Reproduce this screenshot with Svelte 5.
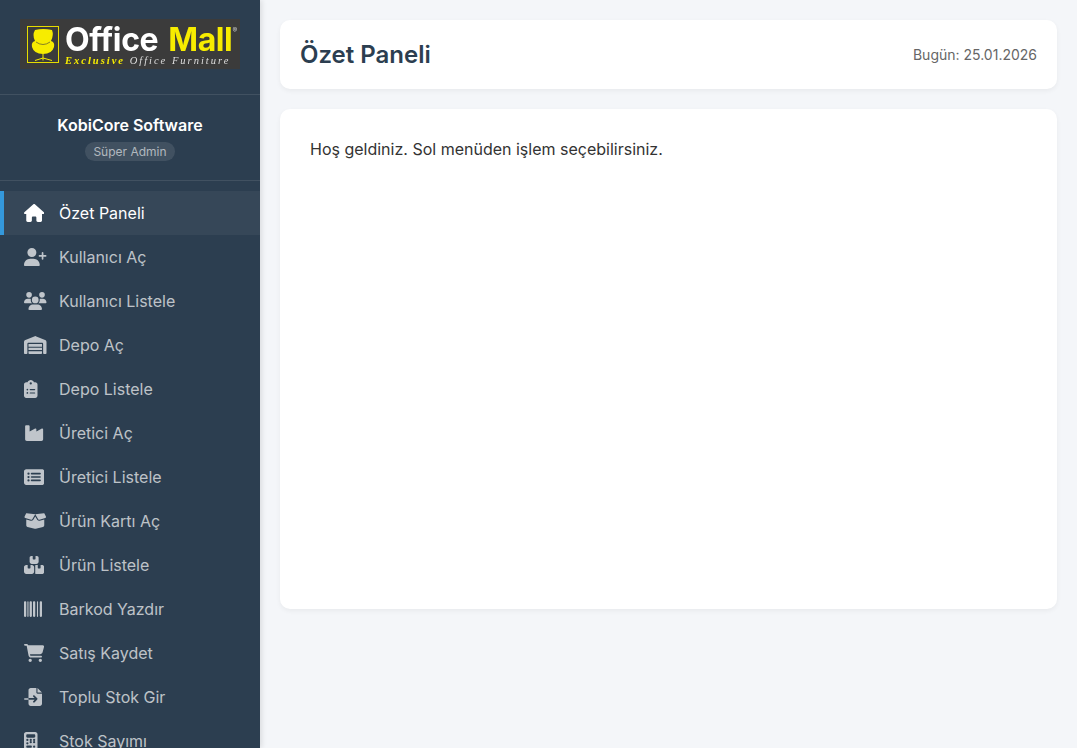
<script>
  const icons = {
    house: ['0 0 576 512', 'M575.8 255.5c0 18-15 32.1-32 32.1h-32l.7 160.2c0 2.7-.2 5.4-.5 8.1V472c0 22.1-17.9 40-40 40H456c-1.1 0-2.2 0-3.3-.1c-1.4 .1-2.8 .1-4.2 .1H416 392c-22.1 0-40-17.9-40-40V448 384c0-17.7-14.3-32-32-32H256c-17.7 0-32 14.3-32 32v64 24c0 22.1-17.9 40-40 40H160 128.1c-1.5 0-3-.1-4.5-.2c-1.2 .1-2.4 .2-3.6 .2H104c-22.1 0-40-17.9-40-40V360c0-.9 0-1.9 .1-2.8V287.6H32c-18 0-32-14-32-32.1c0-9 3-17 10-24L266.4 8c7-7 15-8 22-8s15 2 21 7L564.8 231.5c8 7 12 15 11 24z'],
    userPlus: ['0 0 640 512', 'M96 128a128 128 0 1 1 256 0A128 128 0 1 1 96 128zM0 482.3C0 383.8 79.8 304 178.3 304h91.4C368.2 304 448 383.8 448 482.3c0 16.4-13.3 29.7-29.7 29.7H29.7C13.3 512 0 498.7 0 482.3zM504 312V248H440c-13.3 0-24-10.7-24-24s10.7-24 24-24h64V136c0-13.3 10.7-24 24-24s24 10.7 24 24v64h64c13.3 0 24 10.7 24 24s-10.7 24-24 24H552v64c0 13.3-10.7 24-24 24s-24-10.7-24-24z'],
    users: ['0 0 640 512', 'M144 0a80 80 0 1 1 0 160A80 80 0 1 1 144 0zM512 0a80 80 0 1 1 0 160A80 80 0 1 1 512 0zM0 298.7C0 239.8 47.8 192 106.7 192h42.7c15.9 0 31 3.5 44.6 9.7c-1.3 7.2-1.9 14.7-1.9 22.3c0 38.2 16.8 72.5 43.3 96c-.2 0-.4 0-.7 0H21.3C9.6 320 0 310.4 0 298.7zM405.3 320c-.2 0-.4 0-.7 0c26.6-23.5 43.3-57.8 43.3-96c0-7.6-.7-15-1.9-22.3c13.6-6.3 28.7-9.7 44.6-9.7h42.7C592.2 192 640 239.8 640 298.7c0 11.8-9.6 21.3-21.3 21.3H405.3zM224 224a96 96 0 1 1 192 0 96 96 0 1 1 -192 0zM128 485.3C128 411.7 187.7 352 261.3 352H378.7C452.3 352 512 411.7 512 485.3c0 14.7-11.9 26.7-26.7 26.7H154.7c-14.7 0-26.7-11.9-26.7-26.7z'],
    warehouse: ['0 0 640 512', 'M0 488V171.3c0-26.2 15.9-49.7 40.2-59.4L308.1 4.8c7.6-3.1 16.1-3.1 23.7 0L599.8 111.9c24.3 9.7 40.2 33.3 40.2 59.4V488c0 13.3-10.7 24-24 24H568c-13.3 0-24-10.7-24-24V224c0-17.7-14.3-32-32-32H128c-17.7 0-32 14.3-32 32V488c0 13.3-10.7 24-24 24H24c-13.3 0-24-10.7-24-24zm488 24H152c-13.3 0-24-10.7-24-24V432H512v56c0 13.3-10.7 24-24 24zM128 400V336H512v64H128zm0-96V224H512v80H128z'],
    clipboard: ['0 0 384 512', 'M192 0c-41.8 0-77.4 26.7-90.5 64H64C28.7 64 0 92.7 0 128V448c0 35.3 28.7 64 64 64H320c35.3 0 64-28.7 64-64V128c0-35.3-28.7-64-64-64H282.5C269.4 26.7 233.8 0 192 0zm0 64a32 32 0 1 1 0 64 32 32 0 1 1 0-64zM72 272a24 24 0 1 1 48 0 24 24 0 1 1 -48 0zm104-16H304c8.8 0 16 7.2 16 16s-7.2 16-16 16H176c-8.8 0-16-7.2-16-16s7.2-16 16-16zM72 368a24 24 0 1 1 48 0 24 24 0 1 1 -48 0zm88 0c0-8.8 7.2-16 16-16H304c8.8 0 16 7.2 16 16s-7.2 16-16 16H176c-8.8 0-16-7.2-16-16z'],
    industry: ['0 0 576 512', 'M64 32C46.3 32 32 46.3 32 64V304v48 80c0 26.5 21.5 48 48 48H496c26.5 0 48-21.5 48-48V304 152.2c0-18.2-19.4-29.7-35.4-21.1L352 215.4V152.2c0-18.2-19.4-29.7-35.4-21.1L160 215.4V64c0-17.7-14.3-32-32-32H64z'],
    rectList: ['0 0 576 512', 'M64 32C28.7 32 0 60.7 0 96V416c0 35.3 28.7 64 64 64H512c35.3 0 64-28.7 64-64V96c0-35.3-28.7-64-64-64H64zM128 128a32 32 0 1 1 0 64 32 32 0 1 1 0-64zm0 96a32 32 0 1 1 0 64 32 32 0 1 1 0-64zm0 96a32 32 0 1 1 0 64 32 32 0 1 1 0-64zM216 136H456c13.3 0 24 10.7 24 24s-10.7 24-24 24H216c-13.3 0-24-10.7-24-24s10.7-24 24-24zm0 96H456c13.3 0 24 10.7 24 24s-10.7 24-24 24H216c-13.3 0-24-10.7-24-24s10.7-24 24-24zm0 96H456c13.3 0 24 10.7 24 24s-10.7 24-24 24H216c-13.3 0-24-10.7-24-24s10.7-24 24-24z'],
    boxOpen: ['0 0 640 512', 'M58.9 42.1c3-6.1 9.6-9.6 16.3-8.7L320 64 564.8 33.4c6.7-.8 13.3 2.7 16.3 8.7l41.7 83.4c9 17.9-.6 39.6-19.8 45.1L439.6 217.3c-13.9 4-28.8-1.9-36.2-14.3L320 64 236.6 203c-7.4 12.4-22.3 18.3-36.2 14.3L37.1 170.6c-19.3-5.5-28.8-27.2-19.8-45.1L58.9 42.1zM321.1 128l54.9 91.4c14.9 24.8 44.6 36.6 72.5 28.6L576 211.6v167c0 22-15 41.2-36.4 46.6l-204.1 51c-10.2 2.6-20.9 2.6-31 0l-204.1-51C79 419.7 64 400.5 64 378.5v-167L191.6 248c27.8 8 57.6-3.8 72.5-28.6L318.9 128h2.2z'],
    boxes: ['0 0 576 512', 'M248 0H208c-26.5 0-48 21.5-48 48V160c0 35.3 28.7 64 64 64H352c35.3 0 64-28.7 64-64V48c0-26.5-21.5-48-48-48H328V80c0 8.8-7.2 16-16 16H264c-8.8 0-16-7.2-16-16V0zM64 256c-35.3 0-64 28.7-64 64V448c0 35.3 28.7 64 64 64H224c35.3 0 64-28.7 64-64V320c0-35.3-28.7-64-64-64H184v80c0 8.8-7.2 16-16 16H120c-8.8 0-16-7.2-16-16V256H64zM352 512H512c35.3 0 64-28.7 64-64V320c0-35.3-28.7-64-64-64H472v80c0 8.8-7.2 16-16 16H408c-8.8 0-16-7.2-16-16V256H352c-15 0-28.8 5.1-39.7 13.8c4.9 10.4 7.7 22 7.7 34.2V464c0 12.2-2.8 23.8-7.7 34.2C323.2 506.9 337 512 352 512z'],
    barcode: ['0 0 512 512', 'M24 32C10.7 32 0 42.7 0 56V456c0 13.3 10.7 24 24 24H40c13.3 0 24-10.7 24-24V56c0-13.3-10.7-24-24-24H24zm88 0c-8.8 0-16 7.2-16 16V464c0 8.8 7.2 16 16 16s16-7.2 16-16V48c0-8.8-7.2-16-16-16zm72 0c-13.3 0-24 10.7-24 24V456c0 13.3 10.7 24 24 24h16c13.3 0 24-10.7 24-24V56c0-13.3-10.7-24-24-24H184zm96 0c-13.3 0-24 10.7-24 24V456c0 13.3 10.7 24 24 24h16c13.3 0 24-10.7 24-24V56c0-13.3-10.7-24-24-24H280zM448 56V456c0 13.3 10.7 24 24 24h16c13.3 0 24-10.7 24-24V56c0-13.3-10.7-24-24-24H472c-13.3 0-24 10.7-24 24zm-64-24c-8.8 0-16 7.2-16 16V464c0 8.8 7.2 16 16 16s16-7.2 16-16V48c0-8.8-7.2-16-16-16z'],
    cart: ['0 0 576 512', 'M0 24C0 10.7 10.7 0 24 0H69.5c22 0 41.5 12.8 50.6 32h411c26.3 0 45.5 25 38.6 50.4l-41 152.3c-8.5 31.4-37 53.3-69.5 53.3H170.7l5.4 28.5c2.2 11.3 12.1 19.5 23.6 19.5H488c13.3 0 24 10.7 24 24s-10.7 24-24 24H199.7c-34.6 0-64.3-24.6-70.7-58.5L77.4 54.5c-.7-3.8-4-6.5-7.9-6.5H24C10.7 48 0 37.3 0 24zM128 464a48 48 0 1 1 96 0 48 48 0 1 1 -96 0zm336-48a48 48 0 1 1 0 96 48 48 0 1 1 0-96z'],
    fileImport: ['0 0 512 512', 'M128 64c0-35.3 28.7-64 64-64H352V128c0 17.7 14.3 32 32 32H512V448c0 35.3-28.7 64-64 64H192c-35.3 0-64-28.7-64-64V336H302.1l-39 39c-9.4 9.4-9.4 24.6 0 33.9s24.6 9.4 33.9 0l80-80c9.4-9.4 9.4-24.6 0-33.9l-80-80c-9.4-9.4-24.6-9.4-33.9 0s-9.4 24.6 0 33.9l39 39H128V64zm0 224v48H24c-13.3 0-24-10.7-24-24s10.7-24 24-24H128zM512 128H384V0L512 128z'],
    calculator: ['0 0 384 512', 'M64 0C28.7 0 0 28.7 0 64V448c0 35.3 28.7 64 64 64H320c35.3 0 64-28.7 64-64V64c0-35.3-28.7-64-64-64H64zM96 64H288c17.7 0 32 14.3 32 32v32c0 17.7-14.3 32-32 32H96c-17.7 0-32-14.3-32-32V96c0-17.7 14.3-32 32-32zm32 160a32 32 0 1 1 -64 0 32 32 0 1 1 64 0zM96 352a32 32 0 1 1 0-64 32 32 0 1 1 0 64zM64 416c0-17.7 14.3-32 32-32h96c17.7 0 32 14.3 32 32s-14.3 32-32 32H96c-17.7 0-32-14.3-32-32zM192 256a32 32 0 1 1 0-64 32 32 0 1 1 0 64zm32 32a32 32 0 1 1 -64 0 32 32 0 1 1 64 0zm64-32a32 32 0 1 1 0-64 32 32 0 1 1 0 64zm32 32a32 32 0 1 1 -64 0 32 32 0 1 1 64 0zM288 448a32 32 0 1 1 0-64 32 32 0 1 1 0 64z']
  };

  const menu = [
    { label: 'Özet Paneli', icon: 'house', active: true },
    { label: 'Kullanıcı Aç', icon: 'userPlus' },
    { label: 'Kullanıcı Listele', icon: 'users' },
    { label: 'Depo Aç', icon: 'warehouse' },
    { label: 'Depo Listele', icon: 'clipboard' },
    { label: 'Üretici Aç', icon: 'industry' },
    { label: 'Üretici Listele', icon: 'rectList' },
    { label: 'Ürün Kartı Aç', icon: 'boxOpen' },
    { label: 'Ürün Listele', icon: 'boxes' },
    { label: 'Barkod Yazdır', icon: 'barcode' },
    { label: 'Satış Kaydet', icon: 'cart' },
    { label: 'Toplu Stok Gir', icon: 'fileImport' },
    { label: 'Stok Sayımı', icon: 'calculator' }
  ];
</script>

<div class="layout">
  <aside class="sidebar">
    <div class="brand">
      <div class="logo">
        <svg class="chair" viewBox="0 0 32 37" aria-hidden="true">
          <rect x="0.5" y="0.5" width="31" height="36" fill="none" stroke="#e6dc00"/>
          <path d="M8 4Q16 2 25 4Q27 9 24 15Q28 16 27 21Q25 28 16 28Q7 28 5 21Q4 16 8 15Q5 9 8 4Z" fill="#f7ec00"/>
          <path d="M9 16Q16 21 23 16" fill="none" stroke="#3b3b3b" stroke-width="0.6"/>
          <path d="M16 28V32M8 34.5L16 32L25 34.5M16 32V34.5" fill="none" stroke="#f7ec00"/>
        </svg>
        <div class="wordmark">
          <div class="name"><span class="white">Office</span><span class="yellow">Mall</span><sup>®</sup></div>
          <div class="tagline"><span class="yellow">Exclusive</span> Office Furniture</div>
        </div>
      </div>
    </div>

    <div class="user">
      <div class="company">KobiCore Software</div>
      <span class="role">Süper Admin</span>
    </div>

    <nav class="menu">
      {#each menu as item}
        <a class="item" class:active={item.active} href="#{item.icon}">
          <span class="icon">
            <svg viewBox={icons[item.icon][0]} aria-hidden="true"><path fill="currentColor" d={icons[item.icon][1]}/></svg>
          </span>
          <span>{item.label}</span>
        </a>
      {/each}
    </nav>
  </aside>

  <main class="main">
    <header class="topbar">
      <h1>Özet Paneli</h1>
      <span class="date">Bugün: 25.01.2026</span>
    </header>
    <section class="panel">
      <p>Hoş geldiniz. Sol menüden işlem seçebilirsiniz.</p>
    </section>
  </main>
</div>

<style>
  :global(body) {
    margin: 0;
    background: #f4f6f9;
    font-family: Inter, "Liberation Sans", sans-serif;
    overflow: hidden;
  }

  .layout {
    display: flex;
    height: 100vh;
    overflow: hidden;
  }

  .sidebar {
    width: 260px;
    flex-shrink: 0;
    background: #2c3e50;
    color: #fff;
    box-shadow: 2px 0 5px rgba(0, 0, 0, 0.1);
    overflow: hidden;
    z-index: 1;
  }

  .brand {
    padding: 20px;
    height: 54px;
    border-bottom: 1px solid rgba(255, 255, 255, 0.1);
  }

  .logo {
    height: 50px;
    background: #3b3b3b;
    display: flex;
    align-items: center;
    gap: 6px;
    padding: 0 7px;
    box-sizing: border-box;
    margin-top: -1px;
    filter: blur(0.25px);
  }

  .chair {
    width: 32px;
    height: 37px;
    flex-shrink: 0;
  }

  .wordmark {
    flex: 1;
    white-space: nowrap;
    padding-top: 3px;
  }

  .name {
    font-weight: 700;
    font-size: 32px;
    line-height: 30px;
    letter-spacing: -0.4px;
  }

  .name .yellow {
    margin-left: 10px;
  }

  .name sup {
    font-size: 7px;
    line-height: 0;
    color: #ccc;
    vertical-align: 18px;
    font-weight: 400;
  }

  .white { color: #fff; }
  .yellow { color: #f7ec00; }

  .tagline {
    font-family: "Liberation Serif", serif;
    font-style: italic;
    font-size: 10.5px;
    line-height: 12px;
    letter-spacing: 2px;
    color: #ddd;
  }

  .tagline .yellow {
    font-weight: 700;
  }

  .user {
    height: 86px;
    box-sizing: border-box;
    padding-top: 20px;
    text-align: center;
    border-bottom: 1px solid rgba(255, 255, 255, 0.1);
  }

  .company {
    font-size: 16px;
    font-weight: 600;
    line-height: 20px;
    margin-bottom: 7px;
  }

  .role {
    display: block;
    width: max-content;
    margin: 0 auto;
    font-size: 12px;
    line-height: 15px;
    padding: 2px 8px;
    border-radius: 10px;
    background: rgba(255, 255, 255, 0.1);
    color: rgba(255, 255, 255, 0.6);
  }

  .menu {
    padding-top: 10px;
  }

  .item {
    display: flex;
    align-items: center;
    height: 44px;
    padding-left: 24px;
    box-sizing: border-box;
    font-size: 16px;
    color: rgba(255, 255, 255, 0.7);
    text-decoration: none;
  }

  .item.active {
    padding-left: 20px;
    border-left: 4px solid #3498db;
    background: rgba(255, 255, 255, 0.05);
    color: #fff;
  }

  .icon {
    width: 20px;
    margin-right: 15px;
    flex-shrink: 0;
    display: flex;
  }

  .icon svg {
    height: 18px;
    width: auto;
    flex-shrink: 0;
    display: block;
  }

  .main {
    flex: 1;
    min-width: 0;
    padding: 20px;
    display: flex;
    flex-direction: column;
    gap: 20px;
  }

  .topbar {
    height: 69px;
    box-sizing: border-box;
    background: #fff;
    border-radius: 10px;
    padding: 0 20px;
    display: flex;
    align-items: center;
    justify-content: space-between;
    box-shadow: 0 2px 5px rgba(0, 0, 0, 0.05);
  }

  h1 {
    margin: 0;
    font-size: 24px;
    font-weight: 600;
    color: #2c3e50;
  }

  .date {
    font-size: 14px;
    color: #666;
  }

  .panel {
    height: 500px;
    box-sizing: border-box;
    background: #fff;
    border-radius: 10px;
    padding: 30px;
    box-shadow: 0 2px 5px rgba(0, 0, 0, 0.05);
  }

  .panel p {
    margin: 0;
    font-size: 16px;
    line-height: 20px;
    color: #333;
  }
</style>
